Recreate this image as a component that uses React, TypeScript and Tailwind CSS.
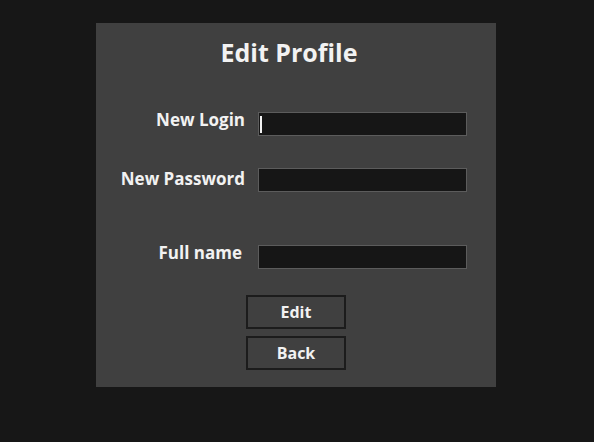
import React from "react";

export default function App() {
  const font = { fontFamily: '"Open Sans", "Noto Sans", sans-serif' };
  return (
    <div className="w-[594px] h-[442px] bg-[#171717] pt-[23px] pl-[96px]" style={font}>
      <div className="w-[400px] h-[364px] bg-[#404040] flex flex-col">
        <div className="h-[58px] flex items-center justify-center pr-[14px] pt-[1px]">
          <h1 className="text-[25px] leading-none font-bold text-[#f2f2f2]">Edit Profile</h1>
        </div>
        <div className="flex items-center mt-[31px] h-[24px]">
          <label className="w-[149px] text-right text-[17px] font-bold text-[#f2f2f2] leading-none -mt-[10px]">New Login</label>
          <div className="ml-[13px] w-[209px] h-[24px] bg-[#161616] border border-[#5c5c5c] flex items-center pl-[1px]">
            <div className="w-[2px] h-[17px] bg-[#f2f2f2]" />
          </div>
        </div>
        <div className="flex items-center mt-[32px] h-[24px]">
          <label className="w-[149px] text-right text-[17px] font-bold text-[#f2f2f2] leading-none -mt-[4px]">New Password</label>
          <div className="ml-[13px] w-[209px] h-[24px] bg-[#161616] border border-[#5c5c5c]" />
        </div>
        <div className="flex items-center mt-[53px] h-[24px]">
          <label className="w-[149px] text-right text-[17px] font-bold text-[#f2f2f2] leading-none -mt-[10px] pr-[3px]">Full name</label>
          <div className="ml-[13px] w-[209px] h-[24px] bg-[#161616] border border-[#5c5c5c]" />
        </div>
        <div className="flex flex-col items-start pl-[150px] mt-[26px] gap-[7px]">
          <button className="w-[100px] h-[34px] border-2 border-[#1c1c1c] bg-[#404040] text-[16px] font-bold text-[#f2f2f2] leading-none">Edit</button>
          <button className="w-[100px] h-[34px] border-2 border-[#1c1c1c] bg-[#404040] text-[16px] font-bold text-[#f2f2f2] leading-none">Back</button>
        </div>
      </div>
    </div>
  );
}
